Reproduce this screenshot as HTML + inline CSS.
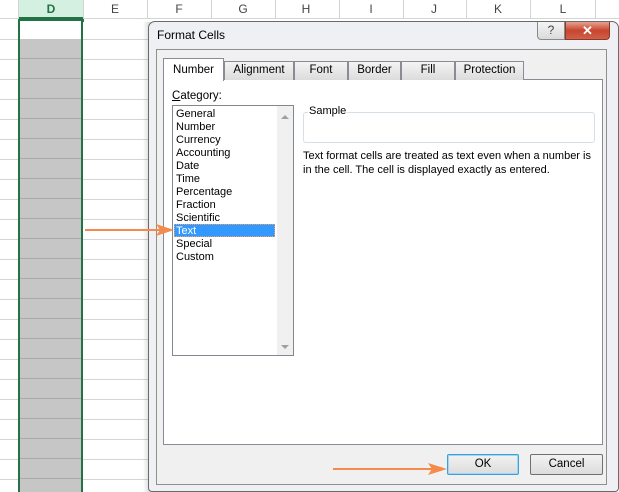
<!DOCTYPE html>
<html><head><style>
*{margin:0;padding:0;box-sizing:border-box}
body{width:619px;height:492px;overflow:hidden;background:#fff;position:relative;font-family:"Liberation Sans",sans-serif;font-size:11px;color:#000}
.a{position:absolute}
.hl{position:absolute;left:0;width:619px;height:1px;background:#d4d4d4}
.vl{position:absolute;top:0;width:1px;height:19px;background:#d4d4d4}
.ch{position:absolute;top:2px;font-size:12px;color:#444;width:20px;text-align:center}
.tab{position:absolute;top:61px;height:19px;border:1px solid #898c95;border-bottom:none;background:linear-gradient(#f4f4f4,#dcdcdc);text-align:center;line-height:17px;font-size:11.5px}
.li{position:absolute;left:176px;font-size:11px;line-height:13px}
.btn{position:absolute;height:21px;border:1px solid #acacac;border-radius:2px;background:linear-gradient(#f2f2f2,#dcdcdc);text-align:center;line-height:19px;font-size:11.5px}
</style></head><body>
<!-- grid -->
<div class="a" style="left:0;top:0;width:619px;height:19px;background:#fff;border-bottom:1px solid #d4d4d4"></div>
<div class="a" style="left:19px;top:0;width:64px;height:19px;background:#d3f0e0;border-bottom:2px solid #217346"></div>
<div class="vl" style="left:18px"></div><div class="vl" style="left:83px"></div><div class="vl" style="left:147px"></div><div class="vl" style="left:211px"></div><div class="vl" style="left:275px"></div><div class="vl" style="left:339px"></div><div class="vl" style="left:403px"></div><div class="vl" style="left:466px"></div><div class="vl" style="left:530px"></div><div class="vl" style="left:595px"></div>
<div class="ch" style="left:41px;color:#217346;font-weight:bold">D</div>
<div class="ch" style="left:105px">E</div><div class="ch" style="left:169px">F</div><div class="ch" style="left:233px">G</div><div class="ch" style="left:296px">H</div><div class="ch" style="left:361px">I</div><div class="ch" style="left:424px">J</div><div class="ch" style="left:488px">K</div><div class="ch" style="left:553px">L</div>
<div class="hl" style="top:39px"></div><div class="hl" style="top:59px"></div><div class="hl" style="top:79px"></div><div class="hl" style="top:99px"></div><div class="hl" style="top:119px"></div><div class="hl" style="top:139px"></div><div class="hl" style="top:159px"></div><div class="hl" style="top:179px"></div><div class="hl" style="top:199px"></div><div class="hl" style="top:219px"></div><div class="hl" style="top:239px"></div><div class="hl" style="top:259px"></div><div class="hl" style="top:279px"></div><div class="hl" style="top:299px"></div><div class="hl" style="top:319px"></div><div class="hl" style="top:339px"></div><div class="hl" style="top:359px"></div><div class="hl" style="top:379px"></div><div class="hl" style="top:399px"></div><div class="hl" style="top:419px"></div><div class="hl" style="top:439px"></div><div class="hl" style="top:459px"></div><div class="hl" style="top:479px"></div>
<!-- selected column -->
<div class="a" style="left:20px;top:39px;width:61px;height:453px;background:repeating-linear-gradient(#c6c6c6 0 19px,#a9a9a9 19px 20px)"></div>
<div class="a" style="left:18px;top:19px;width:2px;height:473px;background:#217346"></div>
<div class="a" style="left:81px;top:19px;width:2px;height:473px;background:#217346"></div>
<div class="a" style="left:18px;top:19px;width:65px;height:2px;background:#217346"></div>
<div class="a" style="left:81px;top:19px;width:3px;height:3px;background:#217346"></div>
<!-- dialog -->
<div class="a" style="left:143px;top:22px;width:8px;height:470px;background:linear-gradient(90deg,rgba(0,0,0,0),rgba(0,0,0,.18))"></div>
<div class="a" style="left:148px;top:21px;width:471px;height:471px;background:#eef0f3;border:1px solid #6a6a6a;border-radius:7px 7px 4px 4px"></div>
<div class="a" style="left:157px;top:28px;font-size:12px">Format Cells</div>
<div class="a" style="left:537px;top:22px;width:28px;height:18px;border:1px solid #8a8a8a;border-top:none;border-radius:0 0 0 4px;background:linear-gradient(#f5f5f5,#dadada);text-align:center;font-size:12px;line-height:17px;color:#444">?</div>
<div class="a" style="left:565px;top:22px;width:45px;height:18px;border:1px solid #8a3a2a;border-top:none;border-radius:0 0 4px 0;background:linear-gradient(#e8a090,#c7452f 50%,#d0604a);text-align:center;font-size:13px;font-weight:bold;line-height:17px;color:#fff">✕</div>
<div class="a" style="left:156px;top:49px;width:451px;height:436px;background:#f0f0f0;border:1px solid #8e8f8f"></div>
<!-- tab content -->
<div class="a" style="left:163px;top:79px;width:440px;height:366px;background:#fff;border:1px solid #898c95"></div>
<div class="tab" style="left:224px;width:70px">Alignment</div>
<div class="tab" style="left:294px;width:54px">Font</div>
<div class="tab" style="left:348px;width:53px">Border</div>
<div class="tab" style="left:401px;width:54px">Fill</div>
<div class="tab" style="left:455px;width:69px">Protection</div>
<div class="tab" style="left:163px;top:58px;width:61px;height:23px;background:#fff;line-height:22px">Number</div>
<div class="a" style="left:172px;top:90px;font-size:11.5px"><u>C</u>ategory:</div>
<div class="a" style="left:172px;top:105px;width:122px;height:251px;border:1px solid #828790;background:#fff"></div>
<div class="a" style="left:277px;top:106px;width:16px;height:249px;background:#f0f0f0"></div>
<div class="a" style="left:281px;top:115px;width:0;height:0;border:4px solid transparent;border-bottom:4px solid #a0a0a0;border-top:none"></div>
<div class="a" style="left:281px;top:345px;width:0;height:0;border:4px solid transparent;border-top:4px solid #a0a0a0;border-bottom:none"></div>
<div class="a" style="left:174px;top:224px;width:101px;height:13px;background:#3399ff;border:1px dotted #f0a060"></div>
<div class="li" style="top:108px">General</div>
<div class="li" style="top:121px">Number</div>
<div class="li" style="top:134px">Currency</div>
<div class="li" style="top:147px">Accounting</div>
<div class="li" style="top:160px">Date</div>
<div class="li" style="top:173px">Time</div>
<div class="li" style="top:186px">Percentage</div>
<div class="li" style="top:199px">Fraction</div>
<div class="li" style="top:212px">Scientific</div>
<div class="li" style="top:225px;color:#fff">Text</div>
<div class="li" style="top:238px">Special</div>
<div class="li" style="top:251px">Custom</div>
<div class="a" style="left:303px;top:112px;width:292px;height:31px;border:1px solid #d5dfe5;border-radius:3px"></div>
<div class="a" style="left:308px;top:105px;background:#fff;padding:0 1px;font-size:11px">Sample</div>
<div class="a" style="left:303px;top:149px;font-size:11px;line-height:14px;width:292px">Text format cells are treated as text even when a number is in the cell. The cell is displayed exactly as entered.</div>
<!-- buttons -->
<div class="btn" style="left:447px;top:454px;width:72px;border-color:#3c9fd8;box-shadow:inset 0 0 0 1px #9fd5f5">OK</div>
<div class="btn" style="left:530px;top:454px;width:73px;border-color:#707070">Cancel</div>
<div class="a" style="left:333px;top:468px;width:100px;height:2px;background:#f58a4b"></div>
<svg class="a" style="left:428px;top:463px" width="19" height="12"><polygon points="0,0 19,6 0,12 4,6" fill="#f58a4b"/></svg>
<!-- arrow 1 (on top) -->
<div class="a" style="left:85px;top:229px;width:76px;height:2px;background:#f58a4b"></div>
<svg class="a" style="left:156px;top:224px" width="18" height="12"><polygon points="0,0 18,6 0,12 4,6" fill="#f58a4b"/></svg>
</body></html>
